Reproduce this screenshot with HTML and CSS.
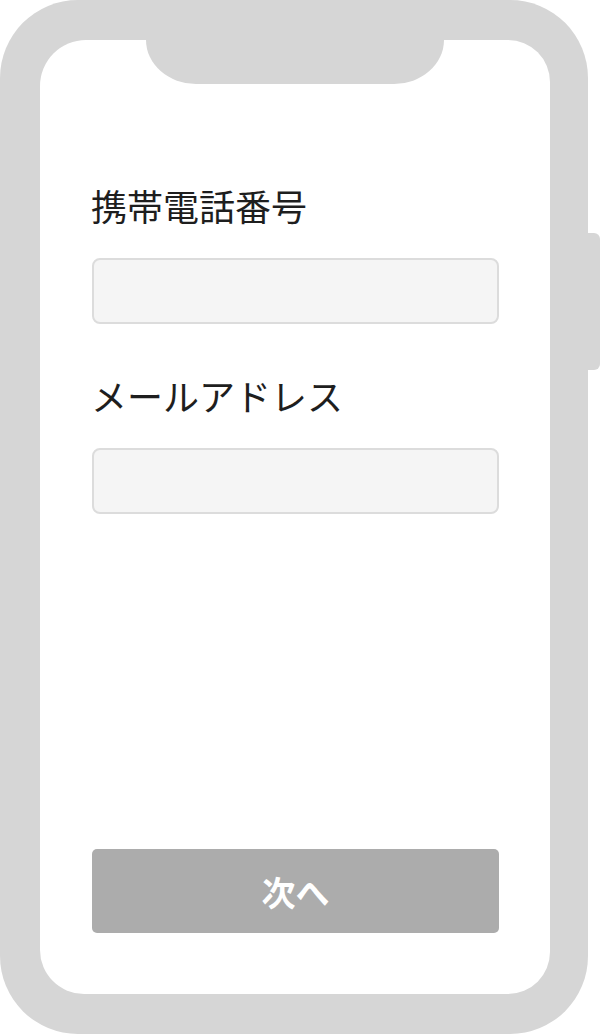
FILE: index.html
```html
<!DOCTYPE html>
<html lang="ja">
<head>
    <meta charset="UTF-8">
    <meta name="viewport" content="width=device-width, initial-scale=1.0">
    <title>登録</title>
    <link rel="stylesheet" href="styles.css">
</head>
<body>
    <div class="device">
        <div class="phone">
            <div class="screen">
                <div class="notch"></div>
                <form class="form">
                    <label class="field-label" for="tel">携帯電話番号</label>
                    <input class="field-input" id="tel" type="tel">
                    <label class="field-label" for="mail">メールアドレス</label>
                    <input class="field-input" id="mail" type="email">
                    <button class="next-btn" type="button">次へ</button>
                </form>
            </div>
        </div>
        <div class="side-btn"></div>
    </div>
</body>
</html>
```

FILE: styles.css
```css
body {
    margin: 0;
    background: #fff;
    font-family: "Noto Sans CJK JP", "Noto Sans", sans-serif;
}

.device {
    display: flex;
    align-items: flex-start;
}

.phone {
    width: 588px;
    height: 1034px;
    box-sizing: border-box;
    padding: 40px 38px 40px 40px;
    background: #d6d6d6;
    border-radius: 78px;
}

.screen {
    height: 100%;
    display: flex;
    flex-direction: column;
    background: #fff;
    border-radius: 46px 42px 42px 44px;
}

.notch {
    align-self: center;
    width: 298px;
    height: 44px;
    flex-shrink: 0;
    background: #d6d6d6;
    border-radius: 0 0 50px 50px / 0 0 44px 44px;
}

.form {
    flex: 1;
    display: flex;
    flex-direction: column;
    padding: 96px 51px 61px 52px;
}

.field-label {
    font-size: 36px;
    line-height: 50px;
    color: #1e1e1e;
    margin-left: -1px;
}

.field-input {
    height: 66px;
    box-sizing: border-box;
    margin: 28px 0 46px;
    background: #f5f5f5;
    border: 2px solid #dcdcdc;
    border-radius: 8px;
    outline: none;
}

.next-btn {
    margin-top: auto;
    height: 84px;
    border: none;
    border-radius: 5px;
    background: #acacac;
    color: #fff;
    font-family: inherit;
    font-size: 34px;
    font-weight: bold;
}

.side-btn {
    width: 12px;
    height: 137px;
    margin-top: 233px;
    background: #d6d6d6;
    border-radius: 0 6px 6px 0;
}
```
